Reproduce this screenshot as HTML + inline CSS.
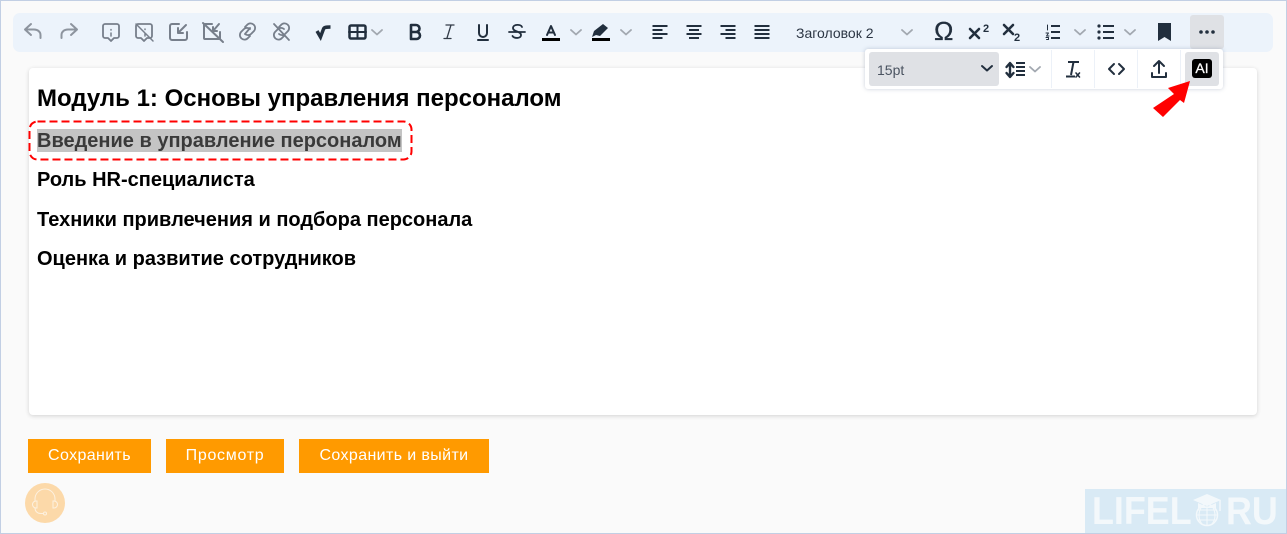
<!DOCTYPE html>
<html><head><meta charset="utf-8"><style>
html,body{margin:0;padding:0}
body{width:1287px;height:534px;position:relative;overflow:hidden;background:#fafafa;font-family:"Liberation Sans",sans-serif}
.a{position:absolute}
.h{position:absolute;left:37px;font-weight:bold;color:#000;white-space:nowrap}
.b{position:absolute;top:439px;height:34px;line-height:34px;background:#ff9a00;color:#fff;text-align:center;font-size:16px;letter-spacing:.38px}
.w{position:absolute;top:489px;height:44px;line-height:45px;font-size:39px;font-weight:bold;color:#f3f8fb;white-space:nowrap;transform-origin:0 0;transform:scaleX(.92)}
</style></head><body>
<div class="a" style="left:0;top:0;width:1287px;height:534px;box-sizing:border-box;border:1px solid #c2cfe4"></div>
<div class="a" style="left:13px;top:13px;width:1260px;height:39px;background:#ecf3fb;border-radius:7px"></div>
<div class="a" style="left:29px;top:68px;width:1228px;height:347px;background:#fff;border-radius:4px;box-shadow:0 1px 4px rgba(0,0,0,.16)"></div>
<div class="a" style="left:1190px;top:15px;width:34px;height:34px;background:#dfe1e5;border-radius:3px"></div>
<div class="a" style="left:865px;top:49px;width:358px;height:40px;background:#fff;border-radius:3px;box-shadow:0 0 4px rgba(60,80,120,.28)"></div>
<div class="a" style="left:869px;top:52px;width:130px;height:34px;background:#dfe1e5;border-radius:3px"></div>
<div class="a" style="left:877px;top:52px;line-height:36px;font-size:14px;color:#4a5360">15pt</div>
<div class="a" style="left:1051px;top:50px;width:1px;height:38px;background:#ecf1f8"></div>
<div class="a" style="left:1094px;top:50px;width:1px;height:38px;background:#ecf1f8"></div>
<div class="a" style="left:1137px;top:50px;width:1px;height:38px;background:#ecf1f8"></div>
<div class="a" style="left:1180px;top:50px;width:1px;height:38px;background:#ecf1f8"></div>
<div class="a" style="left:1185px;top:52px;width:34px;height:34px;background:#dfe1e5;border-radius:3px"></div>
<div class="a" style="left:1192px;top:59px;width:20px;height:19px;background:#000;border-radius:3px;color:#fff;font-size:14px;line-height:19px;text-align:center;-webkit-text-stroke:.3px #fff">AI</div>

<svg class="a" style="left:0;top:0" width="1287" height="534" viewBox="0 0 1287 534" fill="none" stroke-linecap="round" stroke-linejoin="round">
<g stroke="#777f8b" stroke-width="2">
<path d="M31 24l-6 5.500 6 5.500M25 29.500h9c4 0 6.500 2.500 6.500 5.500v3" stroke="#8d949e"/>
<path d="M71 24l6 5.500-6 5.500M77 29.500h-9c-4 0-6.500 2.500-6.500 5.500v3" stroke="#8d949e"/>
<path d="M105 24h12a2 2 0 0 1 2 2v10a2 2 0 0 1-2 2h-3l-3 3-3-3h-3a2 2 0 0 1-2-2V26a2 2 0 0 1 2-2z" stroke-width="1.800"/>
<path d="M111 29.500v.5M111 33v3" stroke-width="1.500"/>
<path d="M138 24h12a2 2 0 0 1 2 2v10a2 2 0 0 1-2 2h-3l-3 3-3-3h-3a2 2 0 0 1-2-2V26a2 2 0 0 1 2-2z" stroke-width="1.800"/>
<path d="M136 24l17 17M145 29v.5M145 33v3" stroke-width="1.500"/>
<path d="M179 24h-7a2 2 0 0 0-2 2v12a2 2 0 0 0 2 2h13a2 2 0 0 0 2-2v-6"/>
<path d="M186 25l-8 8M178 28v5h5"/>
<path d="M212 24h-7a1 1 0 0 0-1 1v13a1 1 0 0 0 1 1h14a1 1 0 0 0 1-1v-6"/>
<path d="M219 24l-6 7M213 27v4h4"/>
<path d="M203 23l20 19"/>
<path d="M245 27l2-2a4.500 4.500 0 0 1 7 6l-3 3a4.500 4.500 0 0 1-6 0M250 36l-2 2a4.500 4.500 0 0 1-7-6l3-3a4.500 4.500 0 0 1 6 0M245 34l5-6" stroke-width="1.800"/>
<path d="M279 27l2-2a4.500 4.500 0 0 1 7 6l-3 3a4.500 4.500 0 0 1-6 0M284 36l-2 2a4.500 4.500 0 0 1-7-6l3-3a4.500 4.500 0 0 1 6 0" stroke-width="1.800"/>
<path d="M274 24l15 16" stroke-width="1.800"/>
</g>
<g stroke="#222f3e" stroke-width="2">
<path d="M317 31l3.500 6 3-8c.5-1.500 2-2 7-2" stroke-width="3.400" stroke-linecap="butt" stroke-linejoin="miter"/>
<rect x="349.500" y="25.500" width="16" height="13" rx="1.500" stroke-width="2.500"/>
<path d="M349 32h17M357.500 25.500v13" stroke-width="2"/>
<path d="M411 25v14h5.500a3.500 3.500 0 0 0 0-7H411h5a3.500 3.500 0 0 0 0-7z" stroke-width="2.600"/>
<path d="M447 38l4-13M446 25h8M444 38.500h7" stroke-width="1.300" stroke="#333c48"/>
<path d="M479 25v8a4 4 0 0 0 8 0v-8M478 40h10" stroke-width="2"/>
<path d="M522 27c-1-3-9-3-9 1 0 4 8 3 8 7 0 4-7 3.500-8.500 1M509 32h16" stroke-width="1.800"/>
<path d="M547 35l4-9 4 9M548.500 32.500h5" stroke-width="2"/>
<path d="M542 39.500h18" stroke="#000" stroke-width="3" stroke-linecap="butt"/>
<path d="M592 39.500h18" stroke="#000" stroke-width="3" stroke-linecap="butt"/>
<path d="M592 37l2-6 9-7 5 4-8 8-4-1z" fill="#222f3e" stroke="none"/>
<path d="M652.500 26h15M652.500 30h10M652.500 34h15M652.500 38h10M686.500 26h15M689 30h10M686.500 34h15M689 38h10M720.500 26h15M725.500 30h10M720.500 34h15M725.500 38h10M754.500 26h15M754.500 30h15M754.500 34h15M754.500 38h15" stroke-width="2" stroke-linecap="butt"/>
<path d="M970 29l9 9M979 29l-9 9" stroke-width="2.600"/>
<path d="M1004 25l9 9M1013 25l-9 9" stroke-width="2.600"/>
<path d="M1053 26h9M1053 32h9M1053 38h9" stroke-width="2" stroke-linecap="butt" transform="translate(-2 0)"/>
<path d="M1047.500 25v5M1046 33h2.500l-2 3h2.500M1046 37.500h2.500v2h-2" stroke-width="1"/>
<path d="M1103 26h11M1103 32h11M1103 38h11" stroke-width="2" stroke-linecap="butt"/>
<circle cx="1099" cy="26" r="1.600" fill="#222f3e" stroke="none"/><circle cx="1099" cy="32" r="1.600" fill="#222f3e" stroke="none"/><circle cx="1099" cy="38" r="1.600" fill="#222f3e" stroke="none"/>
<path d="M1158 23h13v18l-6.500-4-6.500 4z" fill="#222f3e" stroke="none"/>
<circle cx="1201" cy="32" r="1.800" fill="#222f3e" stroke="none"/><circle cx="1207" cy="32" r="1.800" fill="#222f3e" stroke="none"/><circle cx="1213" cy="32" r="1.800" fill="#222f3e" stroke="none"/>
<path d="M1010 64v12M1006.500 67l3.500-4 3.500 4M1006.500 73l3.500 4 3.500-4" stroke-width="2.400"/>
<path d="M1016 63h9M1016 67h9M1016 71h9M1016 75h9" stroke-width="2" stroke-linecap="butt"/>
<path d="M1068 62h11M1073.500 62l-2.500 13M1066 76.500h9" stroke-width="2" stroke-linecap="butt"/>
<path d="M1076 73l3.500 4M1079.500 73l-3.500 4" stroke-width="1.600"/>
<path d="M1114 64l-5 5 5 5M1119 64l5 5-5 5" stroke-width="2"/>
<path d="M1159 73V61M1154 66l5-5 5 5M1152 73v4h14v-4" stroke-width="2"/>
</g>
<text x="934" y="40" font-size="26" fill="#222f3e" stroke="#222f3e" stroke-width=".3" font-family="Liberation Sans">Ω</text>
<text x="983" y="32" font-size="11" font-weight="bold" fill="#222f3e" font-family="Liberation Sans">2</text>
<text x="1014" y="41" font-size="11" font-weight="bold" fill="#222f3e" font-family="Liberation Sans">2</text>
<g stroke="#a2a8b0" stroke-width="1.800">
<path d="M372 30l5 4.500 5-4.500M571 30l5 4.500 5-4.500M621 30l5 4.500 5-4.500M902 30l5 4.500 5-4.500M1075 30l5 4.500 5-4.500M1125 30l5 4.500 5-4.500M1030 67l5 4.500 5-4.500"/>
</g>
<path d="M982 66l5 4.500 5-4.500" stroke="#222f3e" stroke-width="2"/>
<rect x="29.500" y="121.500" width="382" height="38" rx="8" stroke="#f00" stroke-width="2" stroke-dasharray="8 4" stroke-linecap="butt"/>
<path d="M1190 81L1168 88L1174 94L1153 108L1163 117L1180 100L1184 103Z" fill="#f00"/>
</svg>

<div class="a" style="left:796px;top:23px;font-size:14px;line-height:20px;color:#2c3644">Заголовок 2</div>

<div class="a" style="left:37px;top:129px;width:365px;height:23px;background:#c4c4c4"></div>
<div class="h" style="top:85px;font-size:24px;line-height:28px">Модуль 1: Основы управления персоналом</div>
<div class="h" style="top:130px;font-size:20px;line-height:23px;color:#3a3a3a">Введение в управление персоналом</div>
<div class="h" style="top:169px;font-size:20px;line-height:23px">Роль HR-специалиста</div>
<div class="h" style="top:209px;font-size:20px;line-height:23px">Техники привлечения и подбора персонала</div>
<div class="h" style="top:248px;font-size:20px;line-height:23px">Оценка и развитие сотрудников</div>

<div class="b" style="left:28px;width:123px">Сохранить</div>
<div class="b" style="left:166px;width:118px;letter-spacing:.7px">Просмотр</div>
<div class="b" style="left:299px;width:190px">Сохранить и выйти</div>

<div class="a" style="left:25px;top:483px;width:40px;height:40px;border-radius:50%;background:#fcd9a9"></div>
<svg class="a" style="left:25px;top:483px" width="40" height="40" fill="none" stroke="#fdf1e0" stroke-width="1"><path d="M10 18v-2a10 10 0 0 1 20 0v2"/><path d="M12 18h-1a3 3 0 0 0 0 7h1zM28 18h1a3 3 0 0 1 0 7h-1z"/><path d="M10 25c0 3 2 5.500 6 5.500h3"/><circle cx="20" cy="30.500" r="1.500"/></svg>

<div class="a" style="left:1085px;top:489px;width:201px;height:44px;background:#d9eaf5;overflow:hidden"></div>
<div class="w" style="left:1092px">LIFEL</div>
<div class="w" style="left:1226px">RU</div>
<svg class="a" style="left:1190px;top:490px" width="36" height="40" fill="none" stroke="#f3f8fb"><path d="M3 10L17 4l14 6-14 6z" fill="#f3f8fb" stroke="none"/><path d="M8 13v5h18v-5l-9 4z" fill="#f3f8fb" stroke="none"/><path d="M30 10v11" stroke-width="1.500"/><circle cx="17" cy="25" r="10.500" stroke-width="1.500"/><path d="M7 25h20M8 20h18M8 30h18M17 15v20M12 16c-4 6-4 13 0 18M22 16c4 6 4 13 0 18" stroke-width="1.100"/></svg>
</body></html>
